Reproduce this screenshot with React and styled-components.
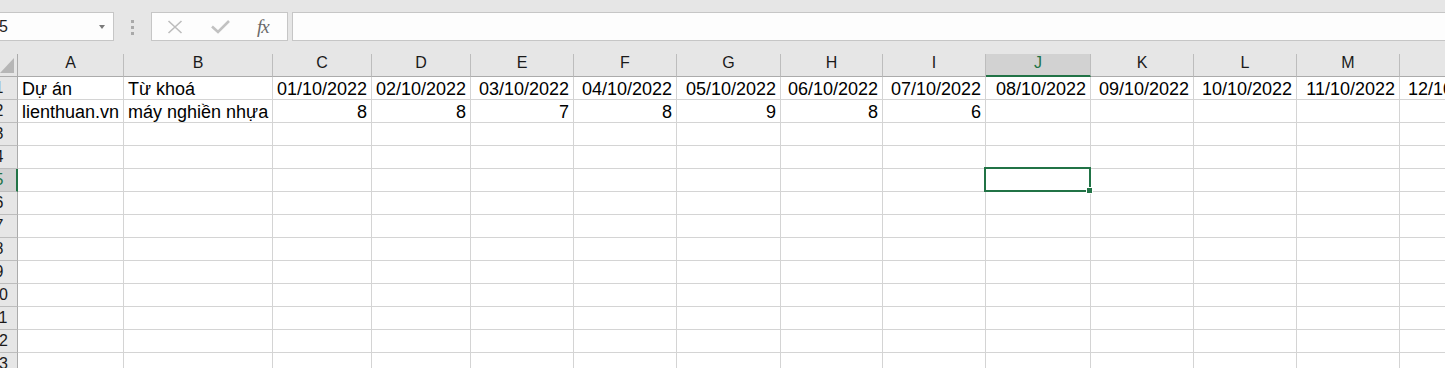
import React from "react";
import styled, { createGlobalStyle } from "styled-components";

const GREEN = "#217346";

const GlobalStyle = createGlobalStyle`
  html, body {
    margin: 0;
    padding: 0;
    background: #ffffff;
    overflow: hidden;
  }
  body {
    font-family: "Liberation Sans", Arial, sans-serif;
  }
`;

const columns = [
  { key: "A", width: 106 },
  { key: "B", width: 149 },
  { key: "C", width: 99 },
  { key: "D", width: 99 },
  { key: "E", width: 103 },
  { key: "F", width: 103 },
  { key: "G", width: 104 },
  { key: "H", width: 102 },
  { key: "I", width: 103 },
  { key: "J", width: 105 },
  { key: "K", width: 103 },
  { key: "L", width: 103 },
  { key: "M", width: 103 },
  { key: "N", width: 103, label: "" },
];

const dates = [
  "01/10/2022",
  "02/10/2022",
  "03/10/2022",
  "04/10/2022",
  "05/10/2022",
  "06/10/2022",
  "07/10/2022",
  "08/10/2022",
  "09/10/2022",
  "10/10/2022",
  "11/10/2022",
  "12/10/2022",
];

const rows = [
  [
    { v: "Dự án" },
    { v: "Từ khoá" },
    ...dates.map((d) => ({ v: d, right: true })),
  ],
  [
    { v: "lienthuan.vn" },
    { v: "máy nghiền nhựa" },
    ...[8, 8, 7, 8, 9, 8, 6].map((n) => ({ v: n, right: true })),
  ],
];

const ROW_COUNT = 13;
const ACTIVE_COL = 9; // J
const ACTIVE_ROW = 5;

const Page = styled.div`
  width: 1445px;
  height: 368px;
  overflow: hidden;
`;

const Toolbar = styled.div`
  height: 54px;
  background: #e6e6e6;
  display: flex;
  align-items: flex-start;
  padding-top: 12px;
  box-sizing: border-box;
`;

const NameBox = styled.div`
  width: 114px;
  height: 29px;
  box-sizing: border-box;
  background: #fdfdfd;
  border: 1px solid #c6c6c6;
  border-left: none;
  display: flex;
  align-items: center;
  justify-content: space-between;
  padding-right: 8px;
  font-size: 16px;
  color: #222;
  overflow: hidden;
`;

const NameText = styled.span`
  margin-left: -1px;
  line-height: 18px;
`;

const DropArrow = styled.span`
  width: 0;
  height: 0;
  border-left: 3.5px solid transparent;
  border-right: 3.5px solid transparent;
  border-top: 4px solid #7a7a7a;
  margin-top: 1px;
`;

const Grip = styled.div`
  margin-left: 17px;
  margin-top: 8px;
  display: flex;
  flex-direction: column;
  gap: 3px;
  span {
    width: 3px;
    height: 3px;
    background: #a9a9a9;
  }
`;

const FxBox = styled.div`
  margin-left: 17px;
  width: 137px;
  height: 29px;
  box-sizing: border-box;
  background: #fdfdfd;
  border: 1px solid #c6c6c6;
  display: flex;
  align-items: center;
  padding-left: 15px;
`;

const FxText = styled.span`
  font-family: "Liberation Serif", "Times New Roman", serif;
  font-style: italic;
  font-size: 19px;
  color: #6a6a6a;
  margin-left: 27px;
  letter-spacing: -1px;
  line-height: 20px;
`;

const FormulaInput = styled.div`
  margin-left: 4px;
  flex: 1;
  height: 29px;
  box-sizing: border-box;
  background: #fdfdfd;
  border: 1px solid #c6c6c6;
  border-right: none;
`;

const Sheet = styled.div`
  display: grid;
  grid-template-columns: 18px ${columns.map((c) => `${c.width}px`).join(" ")};
  grid-auto-rows: 23px;
  width: max-content;
`;

const Corner = styled.div`
  background: #e6e6e6;
  border-right: 1px solid #ababab;
  border-bottom: 1px solid #ababab;
  box-sizing: border-box;
  display: flex;
  align-items: flex-end;
  padding-bottom: 3px;
`;

const ColHead = styled.div`
  box-sizing: border-box;
  background: ${(p) => (p.$active ? "#d2d2d2" : "#e6e6e6")};
  color: ${(p) => (p.$active ? GREEN : "#1a1a1a")};
  border-right: 1px solid #bdbdbd;
  border-bottom: ${(p) => (p.$active ? `2px solid ${GREEN}` : "1px solid #ababab")};
  display: flex;
  align-items: flex-end;
  justify-content: center;
  font-size: 16px;
  line-height: 18px;
  padding-bottom: ${(p) => (p.$active ? "3px" : "4px")};
`;

const RowHead = styled.div`
  box-sizing: border-box;
  background: ${(p) => (p.$active ? "#d2d2d2" : "#e6e6e6")};
  color: ${(p) => (p.$active ? GREEN : "#1a1a1a")};
  border-right: ${(p) => (p.$active ? `2px solid ${GREEN}` : "1px solid #ababab")};
  border-bottom: 1px solid #bdbdbd;
  display: flex;
  align-items: center;
  overflow: hidden;
  font-size: 16px;
`;

const RowNum = styled.span`
  flex: none;
  width: 34px;
  margin-left: -18px;
  text-align: center;
  line-height: 22px;
`;

const Cell = styled.div`
  position: relative;
  box-sizing: border-box;
  background: #ffffff;
  border-right: 1px solid #d4d4d4;
  border-bottom: 1px solid #d4d4d4;
  display: flex;
  align-items: flex-end;
  justify-content: ${(p) => (p.$right ? "flex-end" : "flex-start")};
  padding: 0 4px;
  font-size: 18px;
  line-height: 20px;
  color: #000;
  white-space: nowrap;
  overflow: visible;
  z-index: ${(p) => (p.$selected ? 2 : "auto")};
`;

const Frame = styled.div`
  position: absolute;
  top: -2px;
  left: -2px;
  right: -1px;
  bottom: -1px;
  border: 2px solid ${GREEN};
  pointer-events: none;
`;

const Handle = styled.div`
  position: absolute;
  right: -4px;
  bottom: -4px;
  width: 5px;
  height: 5px;
  background: ${GREEN};
  border: 1px solid #ffffff;
`;

const CancelIcon = () => (
  <svg width="16" height="14" viewBox="0 0 16 14">
    <path d="M1.5 1 L14.5 13 M14.5 1 L1.5 13" stroke="#bdbdbd" strokeWidth="1.6" fill="none" />
  </svg>
);

const CheckIcon = () => (
  <svg width="19" height="14" viewBox="0 0 19 14" style={{ marginLeft: 28 }}>
    <path d="M1 6.5 L7 12 L18 1" stroke="#c2c2c2" strokeWidth="2.6" fill="none" />
  </svg>
);

const SelectAll = () => (
  <svg width="14" height="15" viewBox="0 0 14 15">
    <polygon points="14,0 14,15 0,15" fill="#b6b6b6" />
  </svg>
);

const App = () => {
  const bodyRows = Array.from({ length: ROW_COUNT }, (_, i) => i + 1);
  return (
    <Page>
      <GlobalStyle />
      <Toolbar>
        <NameBox>
          <NameText>5</NameText>
          <DropArrow />
        </NameBox>
        <Grip>
          <span />
          <span />
          <span />
        </Grip>
        <FxBox>
          <CancelIcon />
          <CheckIcon />
          <FxText>fx</FxText>
        </FxBox>
        <FormulaInput />
      </Toolbar>

      <Sheet>
        <Corner>
          <SelectAll />
        </Corner>
        {columns.map((c, ci) => (
          <ColHead key={c.key} $active={ci === ACTIVE_COL}>
            {c.label ?? c.key}
          </ColHead>
        ))}

        {bodyRows.map((r) => {
          const data = rows[r - 1] || [];
          return (
            <React.Fragment key={r}>
              <RowHead $active={r === ACTIVE_ROW}>
                <RowNum>{r}</RowNum>
              </RowHead>
              {columns.map((c, ci) => {
                const cell = data[ci];
                const selected = r === ACTIVE_ROW && ci === ACTIVE_COL;
                return (
                  <Cell key={c.key} $right={cell && cell.right} $selected={selected}>
                    {cell ? cell.v : ""}
                    {selected && (
                      <Frame>
                        <Handle />
                      </Frame>
                    )}
                  </Cell>
                );
              })}
            </React.Fragment>
          );
        })}
      </Sheet>
    </Page>
  );
};

export default App;
